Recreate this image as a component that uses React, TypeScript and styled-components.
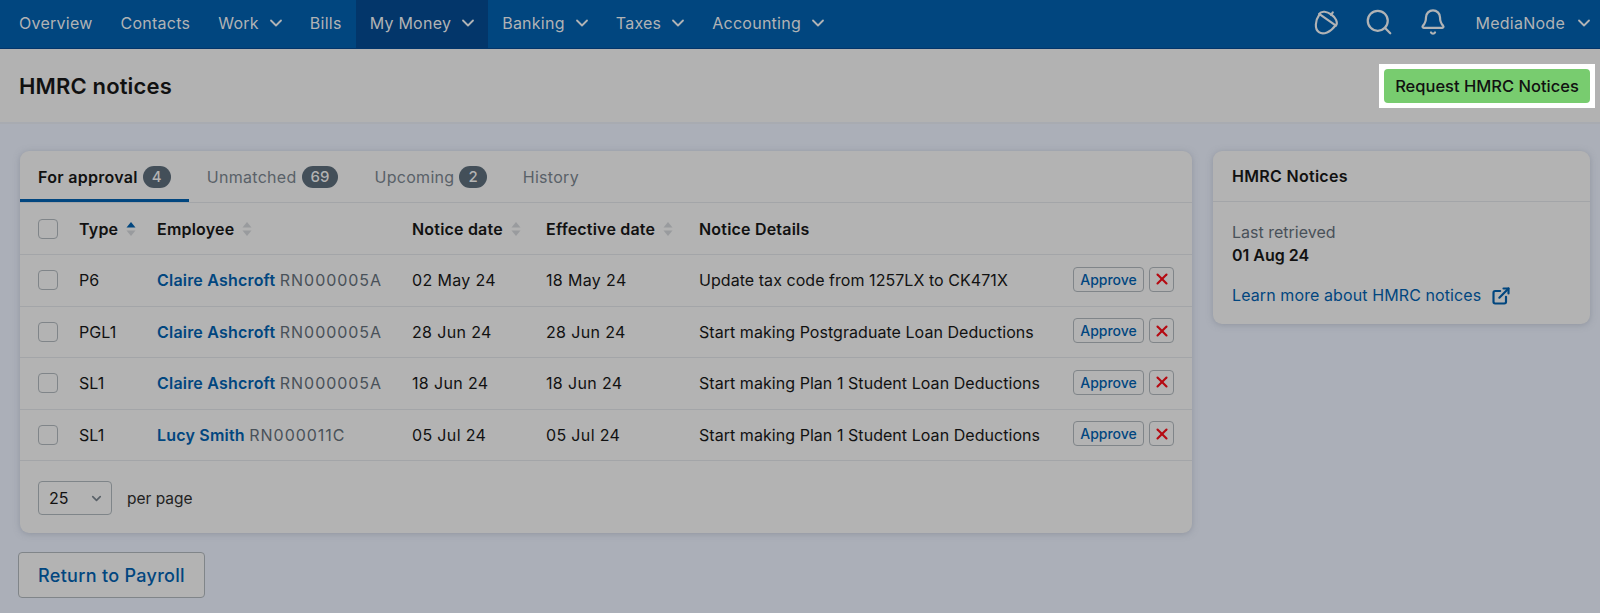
import React from 'react';
import styled, { createGlobalStyle } from 'styled-components';
import { Bell, ChevronDown, ExternalLink, Search, X } from 'lucide-react';

const GlobalStyle = createGlobalStyle`
  html, body {
    margin: 0;
    height: 100%;
    background: #abafb8;
    font-family: Inter, "Liberation Sans", sans-serif;
    color: #111;
  }
`;

const Page = styled.div`
  width: 1600px;
  height: 613px;
  overflow: hidden;
  background: #abafb8;
`;

const NavBar = styled.nav`
  display: flex;
  align-items: stretch;
  justify-content: space-between;
  height: 48px;
  padding: 0 10px 0 5px;
  background: #01467f;
  border-bottom: 1px solid #03356a;
`;

const NavGroup = styled.div`
  display: flex;
  align-items: stretch;
`;

const NavItem = styled.a<{ $active?: boolean }>`
  display: flex;
  align-items: center;
  gap: 11px;
  padding: 0 14px 3px;
  font-size: 16px;
  letter-spacing: 0.25px;
  color: #b1b3b5;
  background: ${(p) => (p.$active ? '#03366a' : 'transparent')};
`;

const NavChevron = styled(ChevronDown)`
  margin: 0 -4px;
`;

const NavIcons = styled.div`
  display: flex;
  align-items: center;
  padding-right: 29px;
  padding-bottom: 4px;
`;

const IconSlot = styled.span<{ $gap?: number }>`
  display: flex;
  margin-left: ${(p) => p.$gap || 0}px;
`;

const AccountName = styled.div`
  display: flex;
  align-items: center;
  gap: 13px;
  padding-bottom: 3px;
  font-size: 16px;
  letter-spacing: 0.25px;
  color: #b1b3b5;
`;

const TitleBar = styled.header`
  display: flex;
  align-items: center;
  justify-content: space-between;
  height: 73px;
  padding: 0 5px 0 19px;
  background: #b2b2b2;
  border-bottom: 2px solid #a8abb1;
`;

const Title = styled.h1`
  margin: 0;
  font-size: 22px;
  font-weight: 600;
  letter-spacing: 0.15px;
  color: #111;
`;

const Highlight = styled.div`
  display: flex;
  padding: 5px;
  background: #fff;
`;

const RequestButton = styled.button`
  width: 206px;
  height: 34px;
  padding: 0;
  border: 0;
  border-radius: 4px;
  font: 500 16.5px Inter, "Liberation Sans", sans-serif;
  color: #111;
  background: #78cc6f;
`;

const Main = styled.main`
  display: grid;
  grid-template-columns: 1172px 377px;
  gap: 21px;
  align-items: start;
  padding: 27px 10px 0 20px;
`;

const Card = styled.section`
  background: #b3b3b3;
  border-radius: 9px;
  box-shadow: 0 1px 6px rgba(120, 125, 138, 0.55);
  overflow: hidden;
`;

const Tabs = styled.div`
  display: flex;
  height: 52px;
  border-bottom: 1px solid #a3a5a8;
  box-sizing: border-box;
`;

const Tab = styled.div<{ $active?: boolean }>`
  display: flex;
  align-items: center;
  gap: 5px;
  padding: 0 18px;
  font-size: 16px;
  letter-spacing: 0.3px;
  font-weight: ${(p) => (p.$active ? 600 : 400)};
  color: ${(p) => (p.$active ? '#111' : '#596168')};
  box-shadow: ${(p) => (p.$active ? 'inset 0 -3px 0 #01467f' : 'none')};
`;

const Badge = styled.span`
  display: inline-flex;
  align-items: center;
  justify-content: center;
  min-width: 9px;
  height: 22px;
  padding: 0 9px;
  border-radius: 11px;
  background: #434f59;
  color: #b3b3b3;
  font-size: 15px;
  font-weight: 500;
  letter-spacing: 0;
`;

const Row = styled.div<{ $head?: boolean }>`
  display: grid;
  grid-template-columns: 41px 78px 255px 134px 153px 1fr auto;
  align-items: center;
  height: ${(p) => (p.$head ? 52 : 51.5)}px;
  padding: 0 18px;
  box-sizing: border-box;
  border-bottom: 1px solid #a3a5a8;
  font-size: 16px;
  font-weight: ${(p) => (p.$head ? 600 : 400)};
  letter-spacing: ${(p) => (p.$head ? 0.2 : 0.05)}px;
  color: #111;
`;

const HeadCell = styled.div`
  display: flex;
  align-items: center;
  gap: 8px;
`;

const Checkbox = styled.span`
  display: block;
  width: 20px;
  height: 20px;
  box-sizing: border-box;
  border: 1px solid #808589;
  border-radius: 4px;
`;

const EmployeeLink = styled.a`
  font-weight: 600;
  letter-spacing: 0.2px;
  color: #01467f;
`;

const NiNumber = styled.span`
  letter-spacing: 0.95px;
  color: #495159;
`;

const DateCell = styled.div`
  letter-spacing: 0.35px;
`;

const RowActions = styled.div`
  display: flex;
  gap: 5px;
  margin-bottom: 2px;
`;

const ApproveButton = styled.button`
  width: 71px;
  height: 25px;
  padding: 0;
  box-sizing: border-box;
  border: 1px solid #808589;
  border-radius: 4px;
  background: transparent;
  color: #01467f;
  font: 500 14px Inter, "Liberation Sans", sans-serif;
`;

const RejectButton = styled.button`
  display: flex;
  align-items: center;
  justify-content: center;
  width: 25px;
  height: 25px;
  padding: 0;
  box-sizing: border-box;
  border: 1px solid #808589;
  border-radius: 4px;
  background: transparent;
  color: #b50a12;
`;

const Footer = styled.div`
  display: flex;
  align-items: center;
  gap: 15px;
  height: 72px;
  box-sizing: border-box;
  padding: 2px 18px 0;
  font-size: 15.5px;
  color: #222;
`;

const PageSelect = styled.div`
  display: flex;
  align-items: center;
  justify-content: space-between;
  width: 74px;
  height: 34px;
  box-sizing: border-box;
  padding: 0 7px 0 10px;
  border: 1px solid #7f8589;
  border-radius: 4px;
  font-size: 16px;
  color: #111;
`;

const ReturnButton = styled.button`
  display: block;
  width: 187px;
  height: 46px;
  margin: 19px 0 0 -2px;
  padding: 0;
  box-sizing: border-box;
  border: 1px solid #808589;
  border-radius: 4px;
  background: #b3b3b3;
  color: #01467f;
  font: 500 18px Inter, "Liberation Sans", sans-serif;
  letter-spacing: 0.3px;
`;

const SideHeader = styled.div`
  display: flex;
  align-items: center;
  height: 51px;
  padding: 0 19px;
  box-sizing: border-box;
  border-bottom: 1px solid #a3a5a8;
  font-size: 16px;
  font-weight: 600;
  letter-spacing: 0.3px;
`;

const SideBody = styled.div`
  padding: 19px 19px 17px;
  font-size: 16px;
`;

const Label = styled.div`
  line-height: 23px;
  color: #495159;
`;

const Value = styled.div`
  line-height: 23px;
  font-weight: 600;
  color: #111;
`;

const LearnLink = styled.a`
  display: flex;
  align-items: center;
  gap: 10px;
  margin-top: 17px;
  line-height: 23px;
  letter-spacing: 0.1px;
  color: #01467f;
`;

const Acorn = () => (
  <svg width="26" height="28" viewBox="0 0 24 26" fill="none" stroke="#b1b3b5" strokeWidth="2" strokeLinecap="round" strokeLinejoin="round">
    <g transform="rotate(35 12 13)">
      <path d="M3 10.5 C3 18 7 24.5 12 24.5 C17 24.5 21 18 21 10.5" />
      <path d="M2.5 10.5 C2.5 2.5 21.5 2.5 21.5 10.5 Z" />
      <path d="M12 4.8 V2" />
    </g>
  </svg>
);

const SortIcon = ({ asc }: { asc?: boolean }) => (
  <svg width="10" height="16" viewBox="0 0 10 16">
    <path d="M5 1 L9.5 6.5 H0.5 Z" fill={asc ? '#01467f' : '#999b9e'} />
    <path d="M5 15 L9.5 9.5 H0.5 Z" fill="#999b9e" />
  </svg>
);

const navItems = [
  { label: 'Overview' },
  { label: 'Contacts' },
  { label: 'Work', menu: true },
  { label: 'Bills' },
  { label: 'My Money', menu: true, active: true },
  { label: 'Banking', menu: true },
  { label: 'Taxes', menu: true },
  { label: 'Accounting', menu: true },
];

const notices = [
  { type: 'P6', name: 'Claire Ashcroft', ni: 'RN000005A', notice: '02 May 24', effective: '18 May 24', details: 'Update tax code from 1257LX to CK471X' },
  { type: 'PGL1', name: 'Claire Ashcroft', ni: 'RN000005A', notice: '28 Jun 24', effective: '28 Jun 24', details: 'Start making Postgraduate Loan Deductions' },
  { type: 'SL1', name: 'Claire Ashcroft', ni: 'RN000005A', notice: '18 Jun 24', effective: '18 Jun 24', details: 'Start making Plan 1 Student Loan Deductions' },
  { type: 'SL1', name: 'Lucy Smith', ni: 'RN000011C', notice: '05 Jul 24', effective: '05 Jul 24', details: 'Start making Plan 1 Student Loan Deductions' },
];

const App = () => {
  return (
    <Page>
      <GlobalStyle />
      <NavBar>
        <NavGroup>
          {navItems.map((item) => (
            <NavItem key={item.label} $active={item.active}>
              {item.label}
              {item.menu && <NavChevron size={20} strokeWidth={2.2} />}
            </NavItem>
          ))}
        </NavGroup>
        <NavGroup>
          <NavIcons>
            <IconSlot><Acorn /></IconSlot>
            <IconSlot $gap={25}><Search size={30} strokeWidth={1.8} color="#b1b3b5" /></IconSlot>
            <IconSlot $gap={25}><Bell size={28} strokeWidth={1.9} color="#b1b3b5" /></IconSlot>
          </NavIcons>
          <AccountName>
            MediaNode
            <NavChevron size={20} strokeWidth={2.2} />
          </AccountName>
        </NavGroup>
      </NavBar>
      <TitleBar>
        <Title>HMRC notices</Title>
        <Highlight>
          <RequestButton>Request HMRC Notices</RequestButton>
        </Highlight>
      </TitleBar>
      <Main>
        <div>
          <Card>
            <Tabs>
              <Tab $active>For approval <Badge>4</Badge></Tab>
              <Tab>Unmatched <Badge>69</Badge></Tab>
              <Tab>Upcoming <Badge>2</Badge></Tab>
              <Tab>History</Tab>
            </Tabs>
            <Row $head>
              <Checkbox />
              <HeadCell>Type <SortIcon asc /></HeadCell>
              <HeadCell>Employee <SortIcon /></HeadCell>
              <HeadCell>Notice date <SortIcon /></HeadCell>
              <HeadCell>Effective date <SortIcon /></HeadCell>
              <HeadCell>Notice Details</HeadCell>
            </Row>
            {notices.map((n, i) => (
              <Row key={i}>
                <Checkbox />
                <div>{n.type}</div>
                <div><EmployeeLink>{n.name}</EmployeeLink> <NiNumber>{n.ni}</NiNumber></div>
                <DateCell>{n.notice}</DateCell>
                <DateCell>{n.effective}</DateCell>
                <div>{n.details}</div>
                <RowActions>
                  <ApproveButton>Approve</ApproveButton>
                  <RejectButton><X size={18} strokeWidth={2.8} /></RejectButton>
                </RowActions>
              </Row>
            ))}
            <Footer>
              <PageSelect>
                25
                <ChevronDown size={15} strokeWidth={2.6} color="#596168" />
              </PageSelect>
              per page
            </Footer>
          </Card>
          <ReturnButton>Return to Payroll</ReturnButton>
        </div>
        <Card>
          <SideHeader>HMRC Notices</SideHeader>
          <SideBody>
            <Label>Last retrieved</Label>
            <Value>01 Aug 24</Value>
            <LearnLink>
              Learn more about HMRC notices
              <ExternalLink size={20} strokeWidth={2.6} />
            </LearnLink>
          </SideBody>
        </Card>
      </Main>
    </Page>
  );
};

export default App;
